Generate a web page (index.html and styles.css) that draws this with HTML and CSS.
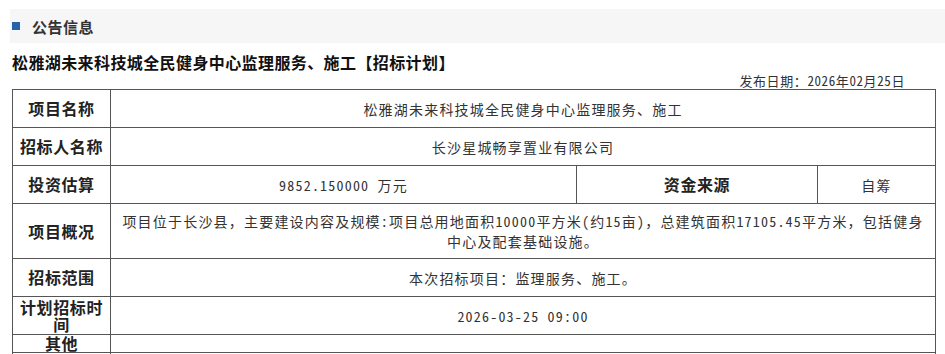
FILE: index.html
```html
<!DOCTYPE html>
<html lang="zh-CN">
<head>
<meta charset="utf-8">
<title>公告信息</title>
<link rel="stylesheet" href="styles.css">
</head>
<body>
<div class="page">
  <div class="section-bar">
    <span class="section-mark"></span>
    <span class="section-title">公告信息</span>
  </div>
  <h1 class="notice-title">松雅湖未来科技城全民健身中心监理服务、施工【招标计划】</h1>
  <div class="publish-date">发布日期：2026年02月25日</div>
  <table class="info-table">
    <colgroup>
      <col class="c1"><col class="c2"><col class="c3"><col class="c4">
    </colgroup>
    <tr class="row">
      <th>项目名称</th>
      <td colspan="3">松雅湖未来科技城全民健身中心监理服务、施工</td>
    </tr>
    <tr class="row">
      <th>招标人名称</th>
      <td colspan="3">长沙星城畅享置业有限公司</td>
    </tr>
    <tr class="row">
      <th>投资估算</th>
      <td>9852.150000 万元</td>
      <th>资金来源</th>
      <td>自筹</td>
    </tr>
    <tr class="row-tall">
      <th>项目概况</th>
      <td colspan="3" class="summary">项目位于长沙县，主要建设内容及规模:项目总用地面积10000平方米(约15亩)，总建筑面积17105.45平方米，包括健身中心及配套基础设施。</td>
    </tr>
    <tr class="row">
      <th>招标范围</th>
      <td colspan="3">本次招标项目：监理服务、施工。</td>
    </tr>
    <tr class="row">
      <th class="wrap">计划招标时间</th>
      <td colspan="3">2026-03-25 09:00</td>
    </tr>
    <tr class="row-short">
      <th>其他</th>
      <td colspan="3"></td>
    </tr>
    <tr class="row">
      <th>&nbsp;</th>
      <td colspan="3"></td>
    </tr>
  </table>
</div>
</body>
</html>
```

FILE: styles.css
```css
html, body {
  margin: 0;
  padding: 0;
  background: #ffffff;
}
body {
  font-family: "Noto Sans CJK SC", "Noto Sans", sans-serif;
  color: #333;
}
.page {
  padding: 9px 0 0 10px;
}
.section-bar {
  display: flex;
  align-items: center;
  height: 34px;
  background: #f6f6f6;
}
.section-mark {
  width: 8px;
  height: 8px;
  margin-left: 2px;
  margin-right: 12px;
  background: #2563a8;
}
.section-title {
  font-size: 15px;
  font-weight: bold;
  color: #333;
  letter-spacing: 0.5px;
}
.notice-title {
  margin: 8px 0 0 2px;
  font-size: 16px;
  line-height: 22px;
  font-weight: bold;
  color: #111;
  letter-spacing: 0.4px;
}
.publish-date {
  text-align: right;
  padding-right: 40px;
  font-family: "Noto Sans Mono CJK SC", "Noto Sans CJK SC", sans-serif;
  font-size: 13px;
  line-height: 16px;
  color: #333;
  letter-spacing: 0.6px;
}
.info-table {
  margin-left: 2px;
  width: 923px;
  border-collapse: collapse;
  table-layout: fixed;
}
.c1 { width: 98px; }
.c2 { width: 466px; }
.c3 { width: 241px; }
.c4 { width: 118px; }
.info-table th,
.info-table td {
  border: 1px solid #555;
  text-align: center;
  vertical-align: middle;
  padding: 0 4px;
}
.info-table th {
  font-size: 16px;
  font-weight: bold;
  color: #222;
  line-height: 17px;
  letter-spacing: 0.6px;
}
.info-table td {
  font-family: "Noto Sans Mono CJK SC", "Noto Sans CJK SC", sans-serif;
  font-size: 14px;
  line-height: 20px;
  color: #333;
  letter-spacing: 1.2px;
}
.row th, .row td {
  height: 37px;
}
.row-tall td.summary {
  padding: 7px 6px;
  text-align: center;
  letter-spacing: 1.2px;
}
.row-short th, .row-short td {
  height: 16px;
}
```
